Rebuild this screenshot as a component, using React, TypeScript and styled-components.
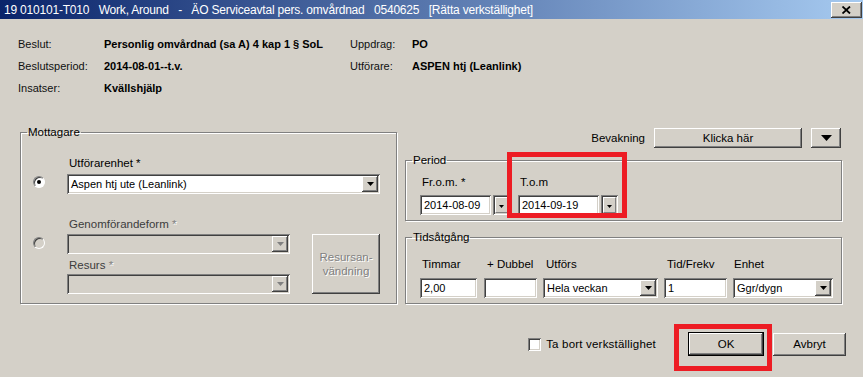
import React from 'react';
import styled, { createGlobalStyle, css } from 'styled-components';

const GlobalStyle = createGlobalStyle`
  html, body {
    margin: 0;
    padding: 0;
    background: #d4d0c8;
  }

  body {
    font-family: 'Liberation Sans', Arial, sans-serif;
    font-size: 11px;
    color: #000;
  }

  * {
    box-sizing: border-box;
  }
`;

const raised = css`
  background: #d4d0c8;
  box-shadow: inset -1px -1px 0 #404040, inset 1px 1px 0 #ffffff,
    inset -2px -2px 0 #808080, inset 2px 2px 0 #d4d0c8;
`;

const sunken = css`
  box-shadow: inset 1px 1px 0 #808080, inset -1px -1px 0 #ffffff,
    inset 2px 2px 0 #404040, inset -2px -2px 0 #d4d0c8;
`;

const etched = css`
  color: #808080;
  text-shadow: 1px 1px 0 #ffffff;
`;

const Window = styled.div`
  width: 863px;
  height: 377px;
  background: #d4d0c8;
  overflow: hidden;
  display: flex;
  flex-direction: column;
`;

const TitleBar = styled.div`
  height: 19px;
  flex: none;
  display: flex;
  align-items: center;
  justify-content: space-between;
  padding: 0 1px 0 4px;
  background: linear-gradient(to right, #0a246a, #a6caf0);
  color: #ffffff;
`;

const TitleText = styled.span`
  font-size: 12px;
  white-space: pre;
  letter-spacing: -0.2px;
`;

const CloseButton = styled.div`
  width: 31px;
  height: 16px;
  display: flex;
  align-items: center;
  justify-content: center;
  ${raised};
`;

const Content = styled.div`
  display: flex;
  flex-direction: column;
  padding: 0 21px 0 18px;
`;

const InfoGrid = styled.div`
  margin-top: 14px;
  display: grid;
  grid-template-columns: 86px 246px 62px 1fr;
  grid-auto-rows: 22px;
  align-items: center;
`;

const InfoLabel = styled.span`
  color: #101010;
`;

const InfoValue = styled.span`
  font-weight: bold;
`;

const MainRow = styled.div`
  margin-top: 27px;
  padding-left: 2px;
  display: flex;
  gap: 8px;
`;

const GroupBox = styled.fieldset<{ $width: number }>`
  margin: 0;
  padding: 0;
  min-width: 0;
  width: ${(p) => p.$width}px;
  flex: none;
  border: 1px solid #808080;
  box-shadow: inset 1px 1px 0 #ffffff, 1px 1px 0 #ffffff;
`;

const GroupTitle = styled.legend`
  margin-left: 6px;
  padding: 0 1px;
  line-height: 13px;
  font-size: 11.5px;
`;

const MottagareGrid = styled.div`
  display: grid;
  grid-template-columns: 12px 223px 68px;
  column-gap: 22px;
  padding-left: 12px;
  align-items: start;
`;

const FieldLabel = styled.div<{ $top: number; $wide?: boolean; $muted?: boolean }>`
  grid-column: ${(p) => (p.$wide ? '2 / 4' : '2')};
  margin-top: ${(p) => p.$top}px;
  padding-left: 2px;
  line-height: 13px;
  font-size: 11.5px;
  white-space: nowrap;
  color: ${(p) => (p.$muted ? '#3c3c3c' : '#000')};
`;

const Star = styled.span<{ $disabled?: boolean }>`
  ${(p) => p.$disabled && etched};
`;

const Radio = styled.div<{ $checked?: boolean }>`
  grid-column: 1;
  align-self: center;
  width: 12px;
  height: 12px;
  border-radius: 50%;
  border: 1px solid;
  border-color: #808080 #ffffff #ffffff #808080;
  background: ${(p) => (p.$checked ? '#ffffff' : '#d4d0c8')};
  box-shadow: inset 1px 1px 0 #404040;
  display: flex;
  align-items: center;
  justify-content: center;

  &::after {
    content: '';
    width: 4px;
    height: 4px;
    border-radius: 50%;
    background: #000;
    display: ${(p) => (p.$checked ? 'block' : 'none')};
  }
`;

const SelectBox = styled.div<{ $width?: number; $top?: number; $disabled?: boolean; $wide?: boolean }>`
  grid-column: ${(p) => (p.$wide ? '2 / 4' : '2')};
  margin-top: ${(p) => p.$top ?? 0}px;
  width: ${(p) => (p.$width ? `${p.$width}px` : 'auto')};
  height: 20px;
  padding: 2px;
  display: flex;
  align-items: center;
  background: ${(p) => (p.$disabled ? '#d4d0c8' : '#ffffff')};
  ${sunken};
`;

const SelectValue = styled.span`
  flex: 1;
  padding-left: 2px;
  line-height: 16px;
  white-space: nowrap;
  overflow: hidden;
`;

const DropButton = styled.div<{ $disabled?: boolean }>`
  width: 16px;
  height: 16px;
  flex: none;
  display: flex;
  align-items: center;
  justify-content: center;
  color: ${(p) => (p.$disabled ? '#808080' : '#000')};
  ${raised};
`;

const SideButton = styled.div`
  grid-column: 3;
  grid-row: span 3;
  align-self: stretch;
  margin-top: 3px;
  display: flex;
  align-items: center;
  justify-content: center;
  text-align: center;
  line-height: 14px;
  font-size: 11.5px;
  ${raised};
  ${etched};
`;

const RightColumn = styled.div`
  flex: none;
  width: 437px;
  display: flex;
  flex-direction: column;
`;

const BevakningRow = styled.div`
  margin-top: 2px;
  height: 20px;
  padding-right: 1px;
  display: flex;
  align-items: center;
  justify-content: flex-end;
`;

const RowLabel = styled.span`
  margin-right: 9px;
  font-size: 11.5px;
`;

const PushButton = styled.div<{ $width: number; $height: number; $isDefault?: boolean }>`
  position: relative;
  width: ${(p) => p.$width}px;
  height: ${(p) => p.$height}px;
  flex: none;
  display: flex;
  align-items: center;
  justify-content: center;
  font-size: 11.5px;
  ${raised};
  ${(p) => p.$isDefault && css`
    border: 1px solid #000;
  `};
`;

const GroupSpacer = styled.div<{ $height: number }>`
  height: ${(p) => p.$height}px;
  flex: none;
`;

const FieldRow = styled.div<{ $bottom: number }>`
  display: flex;
  padding: 0 0 ${(p) => p.$bottom}px 14px;
`;

const Field = styled.div<{ $gap?: number }>`
  position: relative;
  display: flex;
  flex-direction: column;
  margin-left: ${(p) => p.$gap ?? 0}px;
`;

const SmallLabel = styled.div<{ $top: number; $indent?: number }>`
  margin-top: ${(p) => p.$top}px;
  padding-left: ${(p) => p.$indent ?? 2}px;
  line-height: 13px;
  font-size: 11.5px;
  white-space: nowrap;
`;

const InputLine = styled.div<{ $top: number }>`
  margin-top: ${(p) => p.$top}px;
  display: flex;
  gap: 2px;
`;

const TextInput = styled.div<{ $width: number }>`
  width: ${(p) => p.$width}px;
  height: 20px;
  padding: 2px 2px 2px 4px;
  line-height: 16px;
  background: #ffffff;
  white-space: nowrap;
  ${sunken};
`;

const DateButton = styled.div`
  width: 17px;
  height: 20px;
  padding: 2px;
  background: #d4d0c8;
  ${sunken};
`;

const DateButtonFace = styled.div`
  width: 100%;
  height: 100%;
  display: flex;
  align-items: flex-end;
  justify-content: center;
  padding-bottom: 4px;
  border-top: 1px solid #ffffff;
  border-left: 1px solid #ffffff;
  border-right: 1px solid #808080;
  border-bottom: 1px solid #808080;
`;

const Highlight = styled.div<{ $left: number; $top: number; $width: number; $height: number }>`
  position: absolute;
  left: ${(p) => p.$left}px;
  top: ${(p) => p.$top}px;
  width: ${(p) => p.$width}px;
  height: ${(p) => p.$height}px;
  border: 5px solid #ed1c24;
  pointer-events: none;
`;

const Footer = styled.div`
  margin-top: 28px;
  margin-right: -4px;
  display: flex;
  align-items: center;
  justify-content: flex-end;
`;

const CheckBox = styled.div`
  width: 13px;
  height: 13px;
  background: #ffffff;
  ${sunken};
`;

const CheckLabel = styled.span`
  margin-left: 5px;
  margin-right: 32px;
  font-size: 11.5px;
  letter-spacing: 0.2px;
`;

const ButtonGap = styled.div`
  width: 9px;
`;

const Arrow = ({ size = 'sm' }: { size?: 'sm' | 'lg' | 'xs' }) => {
  if (size === 'lg') {
    return (
      <svg width='11' height='6' viewBox='0 0 11 6'>
        <polygon points='0,0 11,0 5.5,6' fill='#000' />
      </svg>
    );
  }

  if (size === 'xs') {
    return (
      <svg width='5' height='3' viewBox='0 0 5 3'>
        <polygon points='0,0 5,0 2.5,3' fill='#000' />
      </svg>
    );
  }

  return (
    <svg width='7' height='4' viewBox='0 0 7 4'>
      <polygon points='0,0 7,0 3.5,4' fill='currentColor' />
    </svg>
  );
};

const Select = ({ value = '', width, top, disabled, wide }: {
  value?: string; width?: number; top?: number; disabled?: boolean; wide?: boolean
}) => (
  <SelectBox $disabled={disabled} $top={top} $width={width} $wide={wide}>
    <SelectValue>{value}</SelectValue>
    <DropButton $disabled={disabled}><Arrow /></DropButton>
  </SelectBox>
);

const DateInput = ({ value, width }: { value: string; width: number }) => (
  <InputLine $top={6}>
    <TextInput $width={width}>{value}</TextInput>
    <DateButton>
      <DateButtonFace><Arrow size='xs' /></DateButtonFace>
    </DateButton>
  </InputLine>
);

const App = (): React.ReactElement => {
  return (
    <Window>
      <GlobalStyle />
      <TitleBar>
        <TitleText>{'19 010101-T010   Work, Around   -   ÄO Serviceavtal pers. omvårdnad   0540625   [Rätta verkställighet]'}</TitleText>
        <CloseButton>
          <svg width='9' height='8' viewBox='0 0 9 8'>
            <path d='M0.5 0.5 L8 7.5 M8 0.5 L0.5 7.5' stroke='#000' strokeWidth='1.8' />
          </svg>
        </CloseButton>
      </TitleBar>
      <Content>
        <InfoGrid>
          <InfoLabel>Beslut:</InfoLabel>
          <InfoValue>Personlig omvårdnad (sa A) 4 kap 1 § SoL</InfoValue>
          <InfoLabel>Uppdrag:</InfoLabel>
          <InfoValue>PO</InfoValue>
          <InfoLabel>Beslutsperiod:</InfoLabel>
          <InfoValue>2014-08-01--t.v.</InfoValue>
          <InfoLabel>Utförare:</InfoLabel>
          <InfoValue>ASPEN htj (Leanlink)</InfoValue>
          <InfoLabel>Insatser:</InfoLabel>
          <InfoValue>Kvällshjälp</InfoValue>
        </InfoGrid>

        <MainRow>
          <GroupBox $width={377}>
            <GroupTitle>Mottagare</GroupTitle>
            <MottagareGrid>
              <FieldLabel $top={18} $wide>Utförarenhet *</FieldLabel>
              <Radio $checked />
              <Select top={4} value='Aspen htj ute (Leanlink)' wide />
              <FieldLabel $muted $top={24}>Genomförandeform <Star $disabled>*</Star></FieldLabel>
              <Radio />
              <Select disabled top={3} />
              <SideButton>Resursan-<br />vändning</SideButton>
              <FieldLabel $muted $top={5}>Resurs <Star $disabled>*</Star></FieldLabel>
              <Select disabled top={2} />
            </MottagareGrid>
          </GroupBox>

          <RightColumn>
            <BevakningRow>
              <RowLabel>Bevakning</RowLabel>
              <PushButton $height={20} $width={148}>Klicka här</PushButton>
              <ButtonGap />
              <PushButton $height={20} $width={30}><Arrow size='lg' /></PushButton>
            </BevakningRow>

            <GroupSpacer $height={6} />
            <GroupBox $width={437}>
              <GroupTitle>Period</GroupTitle>
              <FieldRow $bottom={5}>
                <Field>
                  <SmallLabel $top={9}>Fr.o.m. *</SmallLabel>
                  <DateInput value='2014-08-09' width={71} />
                </Field>
                <Field $gap={8}>
                  <SmallLabel $top={9}>T.o.m</SmallLabel>
                  <DateInput value='2014-09-19' width={81} />
                  <Highlight $height={66} $left={-11} $top={-15} $width={120} />
                </Field>
              </FieldRow>
            </GroupBox>

            <GroupSpacer $height={10} />
            <GroupBox $width={437}>
              <GroupTitle>Tidsåtgång</GroupTitle>
              <FieldRow $bottom={5}>
                <Field>
                  <SmallLabel $top={14}>Timmar</SmallLabel>
                  <InputLine $top={7}><TextInput $width={57}>2,00</TextInput></InputLine>
                </Field>
                <Field $gap={7}>
                  <SmallLabel $indent={3} $top={14}>+ Dubbel</SmallLabel>
                  <InputLine $top={7}><TextInput $width={53} /></InputLine>
                </Field>
                <Field $gap={6}>
                  <SmallLabel $indent={3} $top={14}>Utförs</SmallLabel>
                  <InputLine $top={7}><Select value='Hela veckan' width={115} /></InputLine>
                </Field>
                <Field $gap={6}>
                  <SmallLabel $indent={3} $top={14}>Tid/Frekv</SmallLabel>
                  <InputLine $top={7}><TextInput $width={63}>1</TextInput></InputLine>
                </Field>
                <Field $gap={6}>
                  <SmallLabel $indent={1} $top={14}>Enhet</SmallLabel>
                  <InputLine $top={7}><Select value='Ggr/dygn' width={100} /></InputLine>
                </Field>
              </FieldRow>
            </GroupBox>
          </RightColumn>
        </MainRow>

        <Footer>
          <CheckBox />
          <CheckLabel>Ta bort verkställighet</CheckLabel>
          <PushButton $height={24} $isDefault $width={76}>
            OK
            <Highlight $height={47} $left={-15} $top={-9} $width={98} />
          </PushButton>
          <ButtonGap />
          <PushButton $height={23} $width={73}>Avbryt</PushButton>
        </Footer>
      </Content>
    </Window>
  );
};

export default App;
